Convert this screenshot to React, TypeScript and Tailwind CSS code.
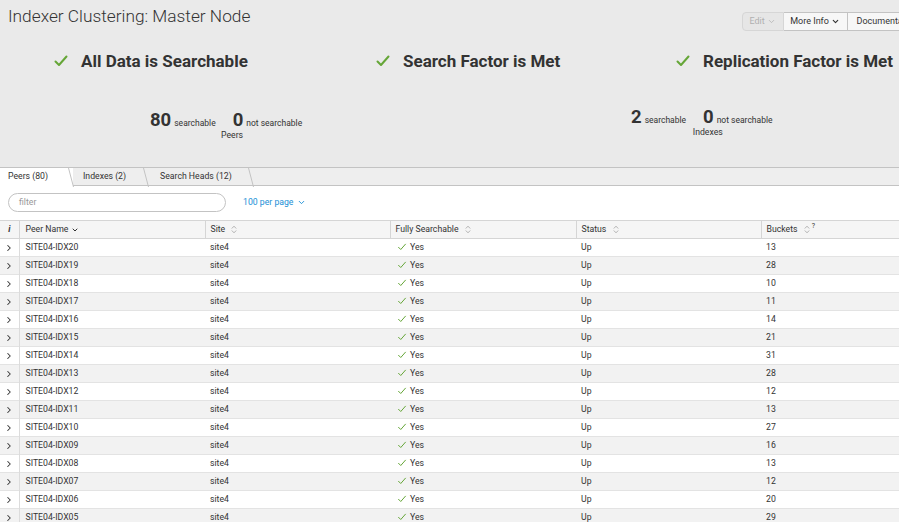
import { ChevronDown, ChevronRight } from 'lucide-react';

const font = { fontFamily: 'Roboto, "Liberation Sans", sans-serif' };

const peers = [
  ['SITE04-IDX20', 13],
  ['SITE04-IDX19', 28],
  ['SITE04-IDX18', 10],
  ['SITE04-IDX17', 11],
  ['SITE04-IDX16', 14],
  ['SITE04-IDX15', 21],
  ['SITE04-IDX14', 31],
  ['SITE04-IDX13', 28],
  ['SITE04-IDX12', 12],
  ['SITE04-IDX11', 13],
  ['SITE04-IDX10', 27],
  ['SITE04-IDX09', 16],
  ['SITE04-IDX08', 13],
  ['SITE04-IDX07', 12],
  ['SITE04-IDX06', 20],
  ['SITE04-IDX05', 29],
] as const;

function Check({ size = 16, width = 2, className = '' }: { size?: number; width?: number; className?: string }) {
  return (
    <svg width={size} height={size} viewBox="0 0 16 16" className={className}>
      <path d="M2.5 8.5 L6 12 L13.5 3.5" fill="none" stroke="#65a637" strokeWidth={width} strokeLinecap="round" strokeLinejoin="round" />
    </svg>
  );
}

function SortIcon() {
  return (
    <svg width="6" height="9" viewBox="0 0 6 9" className="ml-1 inline-block">
      <path d="M0.8 3.5 L3 1.2 L5.2 3.5 M0.8 5.5 L3 7.8 L5.2 5.5" fill="none" stroke="#aaa" strokeWidth="0.9" />
    </svg>
  );
}

function Slant() {
  return (
    <svg width="6" height="19" viewBox="0 0 6 19" className="-mr-px block">
      <path d="M0.5 0 L5.5 19" stroke="#c3c3c3" strokeWidth="1" fill="none" />
    </svg>
  );
}

function Status({ label }: { label: string }) {
  return (
    <div className="flex h-[22px] items-center gap-[12px] whitespace-nowrap">
      <Check size={16} />
      <span className="text-[17px] font-bold leading-none text-[#333]">{label}</span>
    </div>
  );
}

function Stat({ yes, no, label }: { yes: number; no: number; label: string }) {
  return (
    <div className="flex flex-col items-center whitespace-nowrap text-[#333]">
      <div className="flex h-[18px] items-baseline">
        <span className="text-[18.5px] font-bold leading-[17px]">{yes}</span>
        <span className="ml-[3px] text-[8.5px]">searchable</span>
        <span className="ml-[17px] text-[18.5px] font-bold leading-[17px]">{no}</span>
        <span className="ml-[3px] text-[8.5px]">not searchable</span>
      </div>
      <div className="pl-[12px] text-[8.7px] leading-[10px]">{label}</div>
    </div>
  );
}

export default function App() {
  return (
    <div className="h-[522px] w-[899px] overflow-hidden bg-white" style={font}>
      <div className="h-[167px] bg-[#eaeaea]">
        <div className="flex h-[38px] items-start justify-between pl-2 pt-[5px]">
          <h1 className="text-[17.3px] font-light leading-[22px] text-[#333]">Indexer Clustering: Master Node</h1>
          <div className="mr-[-32px] mt-[7px] flex shrink-0 text-[9px]">
            <button className="flex h-[19px] w-[42px] items-center justify-center gap-0.5 rounded-l-sm border border-[#d6d6d6] bg-[#e6e6e6] text-[#b0b0b0]">
              Edit <ChevronDown size={9} />
            </button>
            <button className="flex h-[19px] w-[64px] items-center justify-center gap-0.5 border border-l-0 border-[#c3c3c3] bg-[#f7f7f7] text-[#333]">
              More Info <ChevronDown size={9} strokeWidth={3} />
            </button>
            <button className="flex h-[19px] items-center border border-l-0 border-[#c3c3c3] bg-[#f7f7f7] pl-[9px] pr-3 text-[#333]">
              Documentation
            </button>
          </div>
        </div>
        <div className="mt-[12px] flex pl-[53px]">
          <div className="w-[322px]"><Status label="All Data is Searchable" /></div>
          <div className="w-[300px]"><Status label="Search Factor is Met" /></div>
          <Status label="Replication Factor is Met" />
        </div>
        <div className="flex pt-[37px]">
          <div className="ml-[150px] w-[481px]">
            <div className="inline-block"><Stat yes={80} no={0} label="Peers" /></div>
          </div>
          <div className="inline-block"><Stat yes={2} no={0} label="Indexes" /></div>
        </div>
      </div>

      <div className="flex h-[19px] border-t border-[#c3c3c3] bg-[#eeeeee] text-[8.7px] text-[#333]">
        <div className="flex items-stretch bg-white">
          <span className="flex items-center pl-2 pr-[20px]">Peers (80)</span>
          <Slant />
        </div>
        <div className="flex items-stretch border-b border-[#c3c3c3]">
          <span className="flex items-center pl-[10px] pr-[17px]">Indexes (2)</span>
          <Slant />
        </div>
        <div className="flex items-stretch border-b border-[#c3c3c3]">
          <span className="flex items-center pl-[12px] pr-[16px]">Search Heads (12)</span>
          <Slant />
        </div>
        <div className="flex-1 border-b border-[#c3c3c3]" />
      </div>

      <div className="flex items-center gap-[17px] px-2 pb-[8px] pt-[7px]">
        <div className="flex h-[19px] w-[218px] items-center rounded-full border border-[#c3c3c3] bg-white px-[10px] text-[8.7px] text-[#999]">
          filter
        </div>
        <span className="flex items-center gap-1 text-[8.7px] text-[#1a8fd6]">
          100 per page <ChevronDown size={9} strokeWidth={2.5} />
        </span>
      </div>

      <table className="w-full table-fixed border-collapse text-[8.7px] text-[#333]">
        <colgroup>
          <col className="w-[19px]" />
          <col className="w-[186px]" />
          <col className="w-[185px]" />
          <col className="w-[186px]" />
          <col className="w-[185px]" />
          <col />
        </colgroup>
        <thead>
          <tr className="h-[18px] border-y border-[#d5d5d5] bg-[#f5f5f5] text-left">
            <th className="text-center font-bold italic">i</th>
            <th className="border-l border-[#d5d5d5] pl-[6px] font-normal">
              Peer Name <ChevronDown size={8} strokeWidth={3} className="inline" />
            </th>
            <th className="border-l border-[#d5d5d5] pl-[5px] font-normal">Site <SortIcon /></th>
            <th className="border-l border-[#d5d5d5] pl-[5px] font-normal">Fully Searchable <SortIcon /></th>
            <th className="border-l border-[#d5d5d5] pl-[5px] font-normal">Status <SortIcon /></th>
            <th className="border-l border-[#d5d5d5] pl-[5px] font-normal">
              Buckets <SortIcon /> <sup className="text-[7px]">?</sup>
            </th>
          </tr>
        </thead>
        <tbody>
          {peers.map(([name, buckets], i) => (
            <tr key={name} className={`h-[18px] border-b border-[#e3e3e3] ${i % 2 ? 'bg-[#f2f2f2]' : 'bg-white'}`}>
              <td className="text-center">
                <ChevronRight size={10} strokeWidth={2.5} className="inline" />
              </td>
              <td className="border-l border-[#dcdcdc] pl-[6px]">{name}</td>
              <td className="pl-[5px]">site4</td>
              <td className="pl-[7px]">
                <span className="flex items-center gap-[3px]">
                  <Check size={10} width={1.6} /> Yes
                </span>
              </td>
              <td className="pl-[5px]">Up</td>
              <td className="pl-[5px]">{buckets}</td>
            </tr>
          ))}
        </tbody>
      </table>
    </div>
  );
}
